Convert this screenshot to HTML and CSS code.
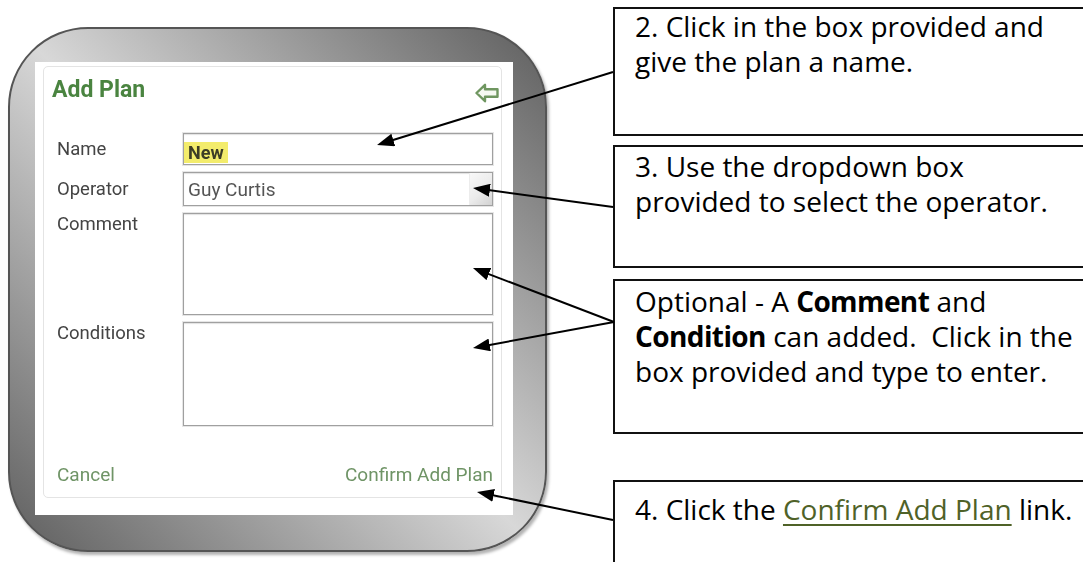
FILE: index.html
```html
<!DOCTYPE html>
<html lang="en">
<head>
    <meta charset="UTF-8">
    <meta name="viewport" content="width=device-width, initial-scale=1.0">
    <title>Add Plan - Instructions</title>
    <link rel="stylesheet" href="styles.css">
</head>
<body>
    <div class="page">
        <div class="frame">
            <div class="shot">
                <div class="card">
                    <div class="card-head">
                        <h2>Add Plan</h2>
                        <svg class="back" width="24" height="20" viewBox="0 0 24 20">
                            <path d="M1.5 10 L10 1.8 L10 6.2 L22.5 6.2 L22.5 13.8 L10 13.8 L10 18.2 Z" fill="#f6f9f2" stroke="#6f9660" stroke-width="2.4" stroke-linejoin="round"/>
                        </svg>
                    </div>
                    <div class="form">
                        <div class="label mid">Name</div>
                        <div class="field"><span class="hl">New</span></div>
                        <div class="label mid">Operator</div>
                        <div class="field select">Guy Curtis<span class="drop"></span></div>
                        <div class="label">Comment</div>
                        <div class="field"></div>
                        <div class="label">Conditions</div>
                        <div class="field"></div>
                    </div>
                    <div class="card-foot">
                        <span>Cancel</span>
                        <span>Confirm Add Plan</span>
                    </div>
                </div>
            </div>
        </div>

        <div class="notes">
            <div class="note n1">2. Click in the box provided and<br>give the plan a name.</div>
            <div class="note n2">3. Use the dropdown box<br>provided to select the operator.</div>
            <div class="note n3">Optional - A <b>Comment</b> and<br><b>Condition</b> can added.&nbsp; Click in the<br>box provided and type to enter.</div>
            <div class="note n4">4. Click the <a class="link" href="#">Confirm Add Plan</a> link.</div>
        </div>
    </div>

    <!-- callout arrows -->
    <svg class="arrows" width="1083" height="562" viewBox="0 0 1083 562">
        <defs>
            <marker id="head" markerUnits="userSpaceOnUse" markerWidth="17" markerHeight="13" refX="7" refY="6.5" orient="auto">
                <path d="M0 0 L17 6.5 L0 13 Z" fill="#000"/>
            </marker>
        </defs>
        <g stroke="#000" stroke-width="2" fill="none" marker-end="url(#head)">
            <line x1="613" y1="72" x2="386.6" y2="142"/>
            <line x1="613" y1="207" x2="482.9" y2="189.3"/>
            <line x1="614" y1="322" x2="482.3" y2="271.6"/>
            <line x1="614" y1="322" x2="482.8" y2="346.2"/>
            <line x1="613" y1="520" x2="486.8" y2="494"/>
        </g>
    </svg>
</body>
</html>
```

FILE: styles.css
```css
html, body {
    margin: 0;
    height: 100%;
    overflow: hidden;
    background: #fff;
}
body {
    position: relative;
    font-family: "Open Sans", sans-serif;
}
.page {
    display: flex;
    align-items: flex-start;
}

/* picture frame round the screenshot */
.frame {
    box-sizing: border-box;
    width: 539px;
    height: 525px;
    margin: 27px 0 0 8px;
    padding: 33px 32px 35px 25px;
    border: 2px solid #555;
    border-radius: 80px;
    background: linear-gradient(45deg, #5e5e5e 0%, #d8d8d8 50%, #5e5e5e 100%);
    box-shadow: 2px 3px 3px rgba(0, 0, 0, 0.3);
}
.shot {
    box-sizing: border-box;
    height: 100%;
    padding: 4px 11px 17px 8px;
    background: #fff;
    filter: blur(0.3px);
}
.card {
    box-sizing: border-box;
    height: 100%;
    padding: 0 8px 0 0;
    border: 1px solid #e4e4e4;
    border-radius: 5px;
    font-family: Roboto, sans-serif;
}
.card-head {
    display: flex;
    justify-content: space-between;
    align-items: center;
    height: 28px;
    margin-top: 9px;
    padding-left: 8px;
}
.card-head h2 {
    margin: 0;
    font-size: 23px;
    line-height: 28px;
    font-weight: 700;
    color: #4a8440;
}
.back {
    margin: 6px -6px 0 0;
}
.form {
    display: grid;
    grid-template-columns: 126px 310px;
    grid-template-rows: 32px 34px 102px 104px;
    row-gap: 7px;
    margin-top: 29px;
    padding-left: 13px;
}
.label {
    font-size: 18.5px;
    line-height: 22px;
    color: #444;
}
.label.mid {
    align-self: center;
}
.field {
    display: flex;
    align-items: center;
    border: 1px solid #a0a0a0;
    box-shadow: inset 0 1px 1px rgba(0, 0, 0, 0.12), 0 0 0 1px #e6e6e6;
    background: #fff;
}
.hl {
    margin-top: 6px;
    padding: 0 4px;
    line-height: 21px;
    font-size: 18px;
    font-weight: 700;
    color: #3c3c26;
    background: #f3ec6c;
}
.select {
    padding-left: 4px;
    font-size: 19px;
    color: #555;
}
.drop {
    align-self: stretch;
    width: 22px;
    margin-left: auto;
    border-left: 1px solid #ececec;
    background: linear-gradient(135deg, #f8f8f8 0%, #ebebeb 55%, #d2d2d2 100%);
}
.card-foot {
    display: flex;
    justify-content: space-between;
    margin-top: 37px;
    padding-left: 13px;
    font-size: 19px;
    line-height: 24px;
    color: #6f9466;
}

/* instruction callouts */
.notes {
    display: flex;
    flex-direction: column;
    margin-left: 66px;
    font-size: 28px;
    line-height: 35px;
    color: #000;
}
.note {
    box-sizing: border-box;
    width: 520px;
    padding-left: 20px;
    border: 2px solid #111;
    white-space: nowrap;
    background: #fff;
}
.note b {
    letter-spacing: -0.6px;
}
.n1 {
    margin-top: 7px;
    height: 129px;
}
.n2 {
    margin-top: 9px;
    height: 123px;
    padding-top: 2px;
}
.n3 {
    margin-top: 11px;
    height: 155px;
    padding-top: 3px;
}
.n4 {
    margin-top: 46px;
    height: 100px;
    padding-top: 10px;
}
.link {
    color: #4f6228;
    text-decoration: underline;
    text-decoration-thickness: 2px;
    text-underline-offset: 4px;
}
.arrows {
    position: absolute;
    left: 0;
    top: 0;
    pointer-events: none;
}
```
